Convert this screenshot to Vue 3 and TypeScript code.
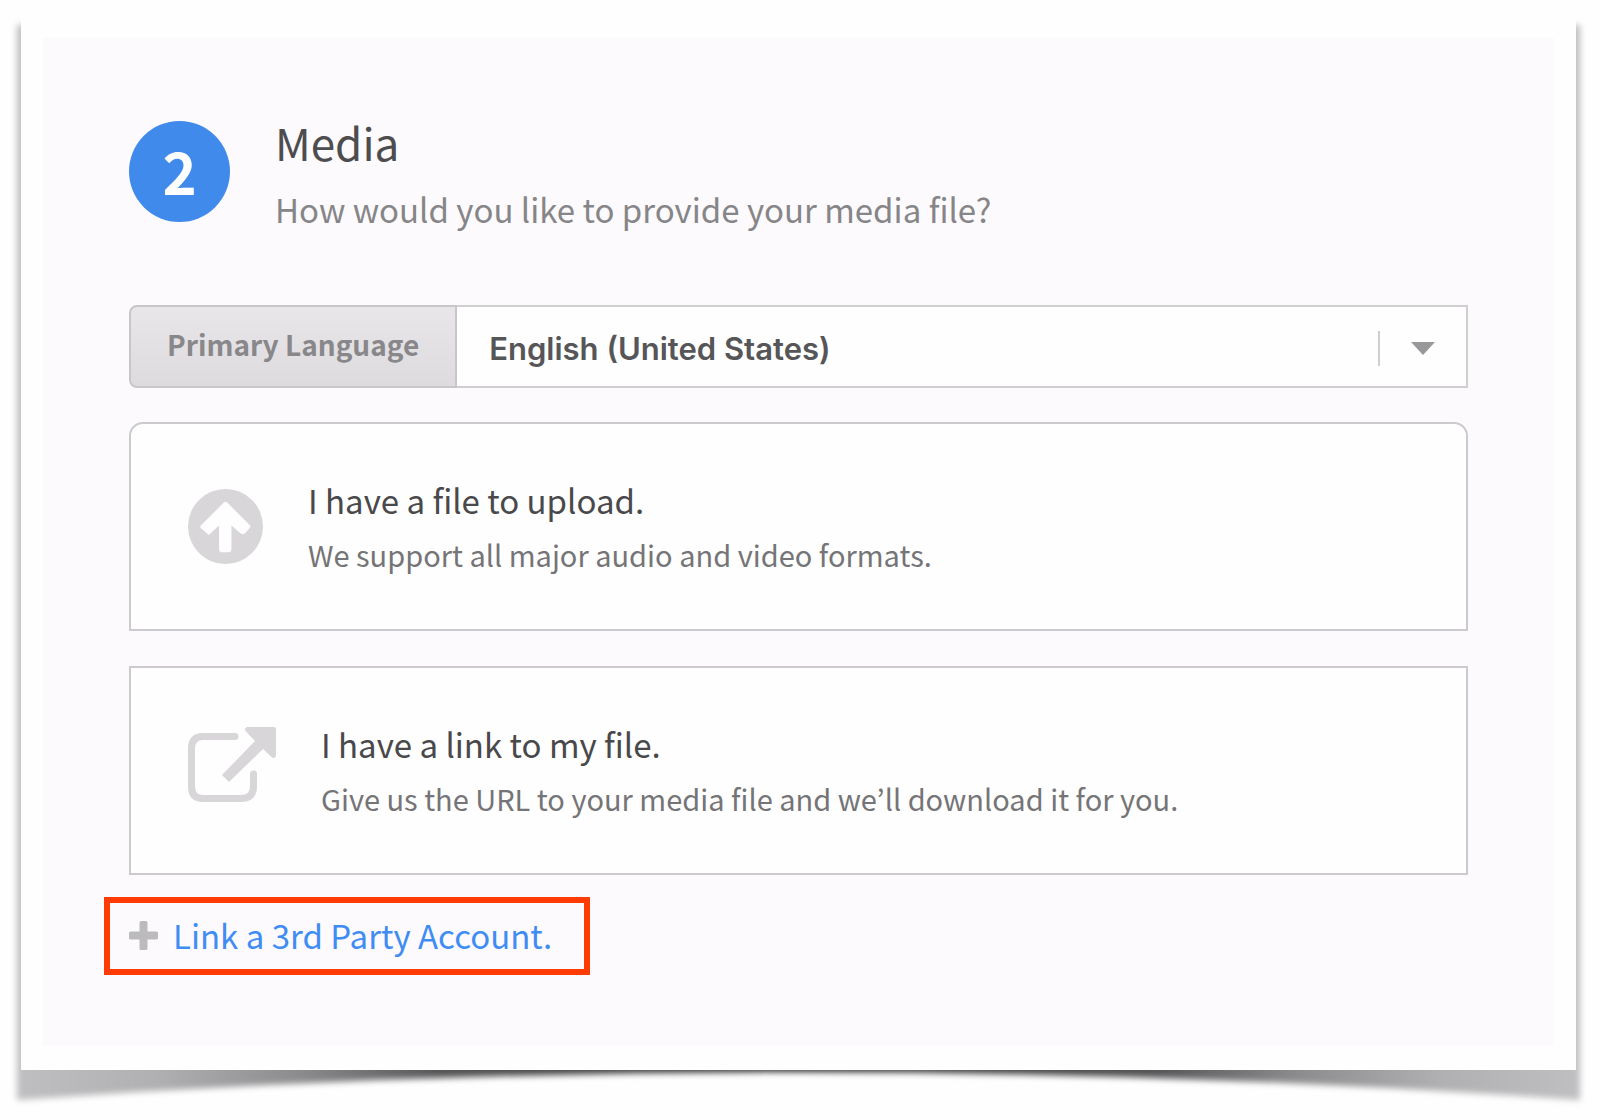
<script setup lang="ts">
import { ref } from 'vue'

interface Source {
  id: 'upload' | 'link'
  title: string
  detail: string
}

const language = ref('en-US')
const languages = [
  { code: 'en-US', name: 'English (United States)' },
  { code: 'en-GB', name: 'English (United Kingdom)' },
]

const sources: Source[] = [
  { id: 'upload', title: 'I have a file to upload.', detail: 'We support all major audio and video formats.' },
  { id: 'link', title: 'I have a link to my file.', detail: 'Give us the URL to your media file and we’ll download it for you.' },
]
const selected = ref<Source['id'] | null>(null)
</script>

<template>
  <div class="page">
    <svg class="shadow" viewBox="0 0 1600 1120" preserveAspectRatio="none" aria-hidden="true">
      <defs>
        <linearGradient id="shade" x1="0" x2="1" y1="0" y2="0">
          <stop offset="0" stop-color="#bfbec0" />
          <stop offset="0.09" stop-color="#b0afb1" />
          <stop offset="0.18" stop-color="#8c8b8d" />
          <stop offset="0.27" stop-color="#565557" />
          <stop offset="0.5" stop-color="#2c2c2d" />
          <stop offset="0.73" stop-color="#565557" />
          <stop offset="0.82" stop-color="#8c8b8d" />
          <stop offset="0.91" stop-color="#b0afb1" />
          <stop offset="1" stop-color="#bfbec0" />
        </linearGradient>
      </defs>
      <path d="M17 25H1580V1100Q800 1044 17 1100Z" fill="url(#shade)" />
    </svg>
    <main class="sheet">
      <section class="panel">
        <header class="head">
          <span class="step">2</span>
          <div class="heading">
            <h1>Media</h1>
            <p>How would you like to provide your media file?</p>
          </div>
        </header>

        <div class="language">
          <label for="language">Primary Language</label>
          <div class="picker">
            <select id="language" v-model="language">
              <option v-for="l in languages" :key="l.code" :value="l.code">{{ l.name }}</option>
            </select>
            <span class="indicator" aria-hidden="true">
              <i class="bar"></i>
              <svg width="26" height="13" viewBox="0 0 26 13"><path d="M1 0H25L13 13Z" fill="#98979a" /></svg>
            </span>
          </div>
        </div>

        <div class="sources">
          <button
            v-for="s in sources"
            :key="s.id"
            type="button"
            class="source"
            :aria-pressed="selected === s.id"
            @click="selected = s.id"
          >
            <svg v-if="s.id === 'upload'" width="75" height="75" viewBox="0 0 76 76" aria-hidden="true">
              <circle cx="38" cy="38" r="38" fill="#d8d6d9" />
              <path
                d="M36 14Q38 12 40 14L62.500 36.500Q64 38 62.500 39.500L58 44.500Q56 46.500 53.500 45L44 37V61.500Q44 64 41.500 64H34Q31.500 64 31.500 61.500V37L21 46.500L13 39.500Q12 38 13 37Z"
                fill="#fefefe"
              />
            </svg>
            <svg v-else width="88" height="88" viewBox="0 0 88 88" aria-hidden="true">
              <path
                d="M47 9.500H15Q3.500 9.500 3.500 21.500V59.500Q3.500 71.500 15 71.500H53Q65.500 71.500 65.500 59.500V47"
                fill="none"
                stroke="#d8d6d9"
                stroke-width="7"
                stroke-linecap="round"
              />
              <path
                d="M59 0H86Q88 0 88 2V29Q87 32 84 30.500L75 22L41 55L34 48L67 14L57.500 4Q56 1 59 0Z"
                fill="#d8d6d9"
              />
            </svg>
            <span class="copy">
              <span class="title">{{ s.title }}</span>
              <span class="detail">{{ s.detail }}</span>
            </span>
          </button>
        </div>

        <div class="third-party">
          <svg width="29" height="29" viewBox="0 0 29 29" aria-hidden="true">
            <path
              d="M12 0H17Q18.500 0 18.500 1.500V10.500H27.500Q29 10.500 29 12V17Q29 18.500 27.500 18.500H18.500V27.500Q18.500 29 17 29H12Q10.500 29 10.500 27.500V18.500H1.500Q0 18.500 0 17V12Q0 10.500 1.500 10.500H10.500V1.500Q10.500 0 12 0Z"
              fill="#bbbabc"
            />
          </svg>
          <a href="#third-party">Link a 3rd Party Account.</a>
        </div>
      </section>
    </main>
  </div>
</template>

<style>
body {
  margin: 0;
  background: #fefefe;
}
</style>

<style scoped>
.page {
  position: relative;
  padding: 18px 24px 50px 21px;
  font-family: 'Noto Sans CJK KR', 'Noto Sans', sans-serif;
}

.shadow {
  position: absolute;
  inset: 0;
  width: 100%;
  height: 100%;
  filter: blur(3px);
}

.sheet {
  position: relative;
  padding: 20px 22px 24px;
  background: #fefefe;
}

.panel {
  padding: 83px 86px 71px;
  background: #fcfafd;
}

.head {
  display: flex;
  align-items: flex-start;
  gap: 45px;
  margin-bottom: 76px;
}

.step {
  display: flex;
  align-items: center;
  justify-content: center;
  flex: none;
  box-sizing: border-box;
  width: 101px;
  height: 101px;
  padding-bottom: 4px;
  border-radius: 50%;
  background: #408aeb;
  color: #fefefe;
  font-size: 58px;
  font-weight: 700;
  line-height: 58px;
}

.heading {
  display: flex;
  flex-direction: column;
  gap: 27px;
  padding-top: 1px;
}

h1,
p {
  margin: 0;
  line-height: 40px;
}

h1 {
  color: #4d4c4f;
  font-size: 44px;
  font-weight: 400;
}

p {
  color: #868588;
  font-size: 33px;
}

.language {
  display: flex;
  height: 83px;
  margin-bottom: 34px;
}

.language label {
  display: flex;
  align-items: center;
  box-sizing: border-box;
  padding: 0 36px 6px;
  border: 2px solid #c8c6c9;
  border-radius: 8px 0 0 8px;
  background: linear-gradient(#e8e6e9, #dddbde);
  color: #88878a;
  font-size: 28px;
  font-weight: 700;
  white-space: nowrap;
}

.picker {
  position: relative;
  flex: 1;
}

.picker select {
  appearance: none;
  box-sizing: border-box;
  width: 100%;
  height: 100%;
  padding: 3px 100px 0 32px;
  border: 2px solid #d0ced1;
  border-left: 0;
  border-radius: 0;
  background: #fefefe;
  color: #565558;
  font-family: Inter, sans-serif;
  font-size: 31px;
  font-weight: 600;
}

.indicator {
  position: absolute;
  inset: 4px 32px 0 auto;
  display: flex;
  align-items: center;
  gap: 30px;
  pointer-events: none;
}

.bar {
  width: 2px;
  height: 35px;
  background: #d0ced1;
}

.sources {
  display: flex;
  flex-direction: column;
  gap: 35px;
}

.source {
  display: flex;
  align-items: center;
  gap: 45px;
  box-sizing: border-box;
  width: 100%;
  min-height: 209px;
  padding: 0 57px;
  border: 2px solid #cccace;
  background: #fefefe;
  font-family: inherit;
  text-align: left;
  cursor: pointer;
}

.source:first-child {
  border-radius: 14px 14px 0 0;
}

.source svg,
.third-party svg {
  flex: none;
}

.copy {
  display: flex;
  flex-direction: column;
  gap: 14px;
  line-height: 40px;
}

.title {
  color: #49484b;
  font-size: 33px;
}

.detail {
  color: #757477;
  font-size: 29px;
}

.third-party {
  display: flex;
  align-items: center;
  gap: 15px;
  box-sizing: border-box;
  width: fit-content;
  height: 78px;
  margin: 22px 0 0 -25px;
  padding: 0 32px 2px 19px;
  border: 6px solid #ff3b05;
}

.third-party a {
  color: #3f8cf3;
  font-size: 33px;
  line-height: 40px;
  text-decoration: none;
}
</style>
